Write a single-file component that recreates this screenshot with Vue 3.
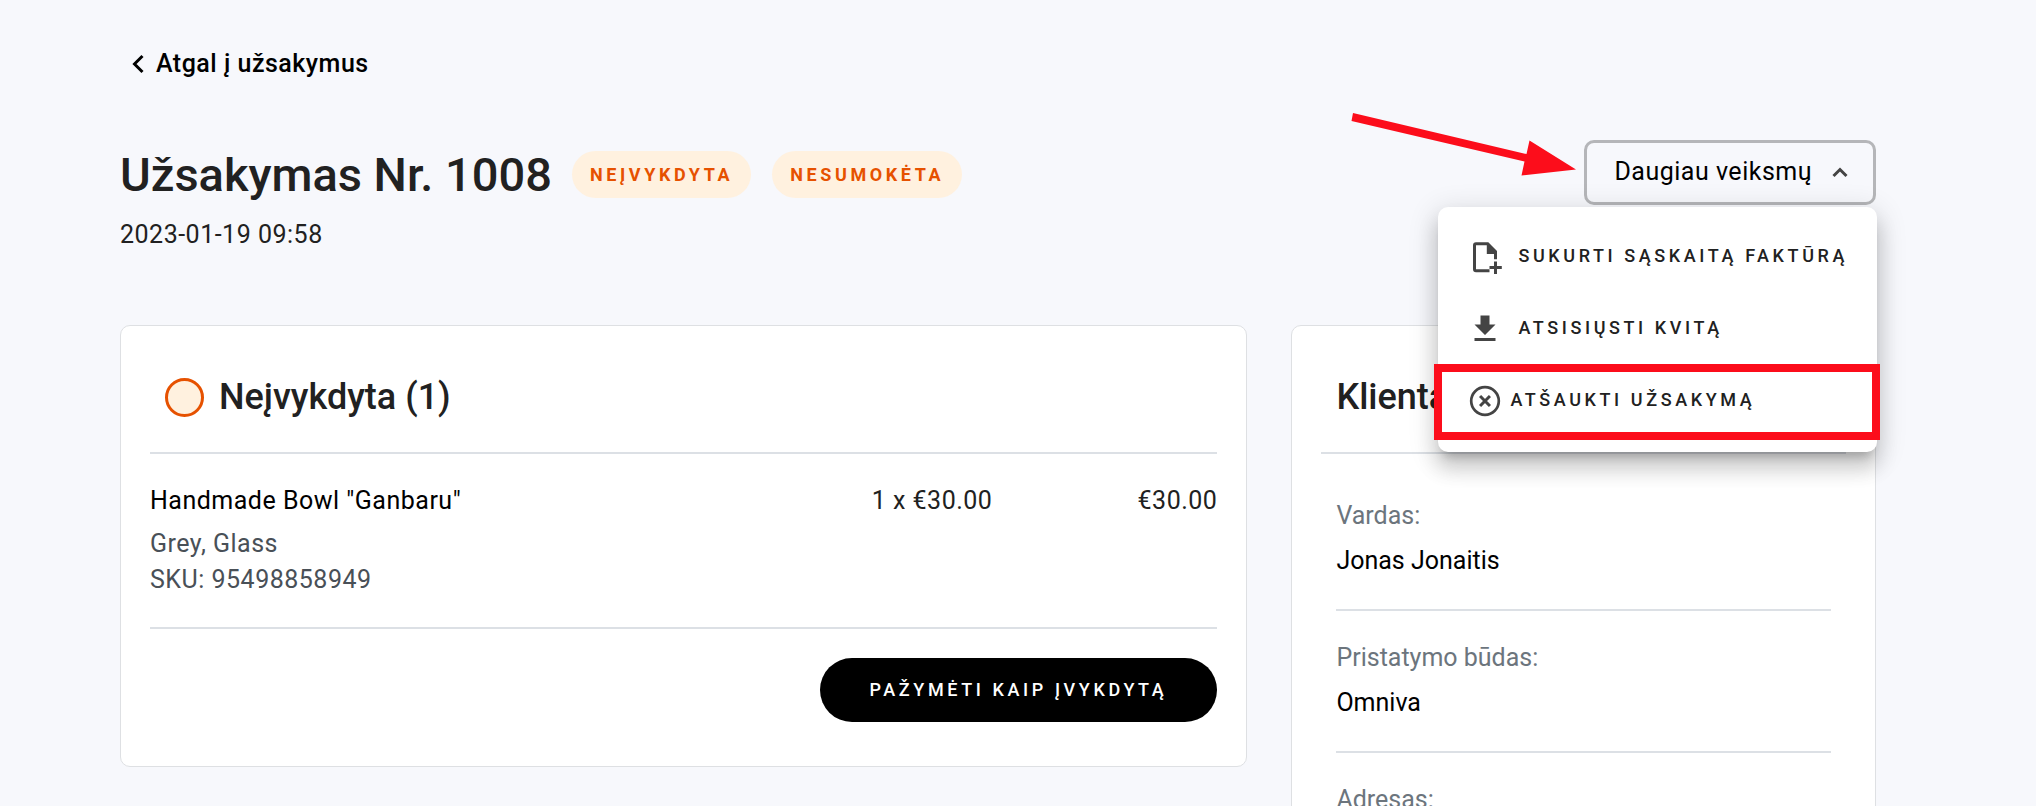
<script setup>
import { ref } from 'vue'

const open = ref(true)
const badges = ['Neįvykdyta', 'Nesumokėta']
const fields = [
  { label: 'Vardas:', value: 'Jonas Jonaitis' },
  { label: 'Pristatymo būdas:', value: 'Omniva' },
  { label: 'Adresas:', value: '' },
]
</script>

<template>
  <main class="page">
    <a class="back" href="#">
      <svg class="back-icon" viewBox="0 0 12 20" aria-hidden="true">
        <path d="M10.5 2 2.5 10l8 8" fill="none" stroke="currentColor" stroke-width="3" />
      </svg>
      Atgal į užsakymus
    </a>

    <header class="head">
      <div class="title-row">
        <h1>Užsakymas Nr. 1008</h1>
        <span v-for="b in badges" :key="b" class="badge caps">{{ b }}</span>
      </div>

      <div class="actions">
        <svg class="arrow" viewBox="0 0 225 64" aria-hidden="true">
          <path d="M2 1 175.500 42 178.500 28.500 225 57.500 170.500 63.500 173.500 49.500 0.500 9z" fill="#fc0d1b" />
        </svg>
        <button class="more" type="button" :aria-expanded="open" @click="open = !open">
          Daugiau veiksmų
          <svg class="more-icon" viewBox="0 0 16 12" aria-hidden="true">
            <path d="M1.500 10 8 3.500 14.500 10" fill="none" stroke="#444" stroke-width="3" />
          </svg>
        </button>

        <div v-if="open" class="menu">
          <button class="item caps" type="button">
            <svg viewBox="0 0 24 24" aria-hidden="true">
              <path d="M6 2.200h8.200L20 8v5.500h-2V10h-4.800V4.200H6v16h9v2H6a2 2 0 0 1-2-2v-16a2 2 0 0 1 2-2z" />
              <path d="M18 15h2v3h3.200v2H20v3.300h-2V20h-3v-2h3z" />
            </svg>
            Sukurti sąskaitą faktūrą
          </button>
          <button class="item caps" type="button">
            <svg viewBox="0 0 24 24" aria-hidden="true">
              <path d="M5 20h14v-2H5v2zM19 9h-4V3H9v6H5l7 7 7-7z" />
            </svg>
            Atsisiųsti kvitą
          </button>
          <button class="item tight marked caps" type="button">
            <svg viewBox="0 0 24 24" aria-hidden="true">
              <circle cx="12" cy="12" r="9.200" fill="none" stroke="#444" stroke-width="1.800" />
              <path d="m8.700 8.700 6.600 6.600m0-6.600-6.600 6.600" fill="none" stroke="#444" stroke-width="2" />
            </svg>
            Atšaukti užsakymą
          </button>
        </div>
      </div>
    </header>
    <time class="date" datetime="2023-01-19T09:58">2023-01-19 09:58</time>

    <div class="columns">
      <section class="card order">
        <div class="card-head">
          <span class="dot"></span>
          <h2>Neįvykdyta (1)</h2>
        </div>
        <table class="lines">
          <tbody>
            <tr>
              <td>
                <div class="name">Handmade Bowl "Ganbaru"</div>
                <div class="meta">Grey, Glass</div>
                <div class="meta">SKU: 95498858949</div>
              </td>
              <td class="num">1 x €30.00</td>
              <td class="num total">€30.00</td>
            </tr>
          </tbody>
        </table>
        <div class="foot">
          <button class="fulfil caps" type="button">Pažymėti kaip įvykdytą</button>
        </div>
      </section>

      <section class="card client">
        <div class="card-head">
          <h2>Klientas</h2>
        </div>
        <dl class="fields">
          <div v-for="f in fields" :key="f.label" class="field">
            <dt>{{ f.label }}</dt>
            <dd>{{ f.value }}</dd>
          </div>
        </dl>
      </section>
    </div>
  </main>
</template>

<style>
body {
  background: #f7f8fc;
}
</style>

<style scoped>
.page {
  box-sizing: border-box;
  min-height: 100vh;
  padding: 48px 160px 0 120px;
  background: #f7f8fc;
  color: #212121;
  font: 400 25px/32px Roboto, "Liberation Sans", sans-serif;
}
h1,
h2,
dl,
dd {
  margin: 0;
}
button {
  font: inherit;
  color: inherit;
  cursor: pointer;
}
.caps {
  font-size: 18px;
  font-weight: 500;
  letter-spacing: 0.2em;
  text-transform: uppercase;
  white-space: nowrap;
}
.back {
  display: flex;
  align-items: center;
  gap: 12px;
  width: fit-content;
  padding-left: 12px;
  color: #000;
  font-weight: 500;
  letter-spacing: 0.02em;
  text-decoration: none;
}
.back-icon {
  width: 12px;
  height: 20px;
}
.head {
  display: flex;
  justify-content: space-between;
  align-items: flex-start;
  margin-top: 60px;
}
.title-row {
  display: flex;
  align-items: center;
  padding-top: 2px;
}
h1 {
  font-size: 47px;
  line-height: 65px;
  font-weight: 500;
  margin-right: 20px;
}
.badge {
  padding: 0 18px;
  margin-right: 21px;
  border-radius: 24px;
  background: #fff1df;
  color: #e65100;
  font-weight: 700;
  line-height: 47px;
}
.actions {
  position: relative;
}
.arrow {
  position: absolute;
  top: -28px;
  right: 100%;
  margin-right: 8px;
  width: 225px;
  height: 64px;
}
.more {
  display: flex;
  align-items: center;
  gap: 20px;
  height: 65px;
  padding: 0 25px 2px 27px;
  border: 3px solid #b5b6b9;
  border-radius: 10px;
  background: transparent;
  color: #000;
  letter-spacing: 0.02em;
}
.more-icon {
  width: 16px;
  height: 12px;
}
.menu {
  position: absolute;
  z-index: 2;
  top: 67px;
  right: -1px;
  padding: 13px 0 16px;
  border-radius: 10px;
  background: #fff;
  box-shadow: 0 10px 10px -6px rgba(0, 0, 0, 0.2), 0 16px 20px 2px rgba(0, 0, 0, 0.14),
    0 6px 28px 4px rgba(0, 0, 0, 0.12);
}
.item {
  position: relative;
  display: flex;
  align-items: center;
  gap: 15px;
  width: 100%;
  height: 72px;
  padding: 0 29px;
  border: 0;
  background: transparent;
}
.item svg {
  width: 36px;
  height: 36px;
  margin-top: 2px;
  fill: #444;
}
.tight {
  gap: 7px;
}
.marked::after {
  content: "";
  position: absolute;
  inset: 0 -3px -4px -4px;
  border: 8px solid #fc0d1b;
}
.date {
  display: block;
  margin-top: 12px;
  letter-spacing: 0.02em;
}
.columns {
  display: grid;
  grid-template-columns: minmax(0, 27fr) minmax(0, 14fr);
  align-items: start;
  gap: 44px;
  margin-top: 74px;
}
.card {
  padding: 0 29px;
  border: 1px solid #dee0e3;
  border-radius: 10px;
  background: #fff;
}
.card-head {
  display: flex;
  align-items: center;
  gap: 15px;
  padding: 47px 15px 31px;
  border-bottom: 2px solid #dce0e5;
}
h2 {
  font-size: 36px;
  line-height: 48px;
  font-weight: 500;
}
.dot {
  box-sizing: border-box;
  width: 39px;
  height: 39px;
  border: 3px solid #e65100;
  border-radius: 50%;
  background: #fff1df;
}
.lines {
  width: 100%;
  border-collapse: collapse;
  border-bottom: 2px solid #dce0e5;
  letter-spacing: 0.02em;
}
.lines td {
  padding: 31px 0 29px;
  vertical-align: top;
}
.name {
  margin-bottom: 9px;
  color: #000;
}
.meta {
  line-height: 36px;
  color: #495057;
}
.lines .num {
  text-align: right;
}
.total {
  width: 225px;
}
.foot {
  display: flex;
  justify-content: flex-end;
  padding: 29px 0 44px;
}
.fulfil {
  height: 64px;
  padding: 0 50px;
  border: 0;
  border-radius: 32px;
  background: #000;
  color: #fff;
}
.fields {
  padding: 15px 15px 0;
}
.field {
  display: grid;
  gap: 13px;
  padding: 31px 0 32px;
  border-bottom: 2px solid #dce0e5;
}
dt {
  color: #6c757d;
}
dd {
  color: #000;
}
</style>
